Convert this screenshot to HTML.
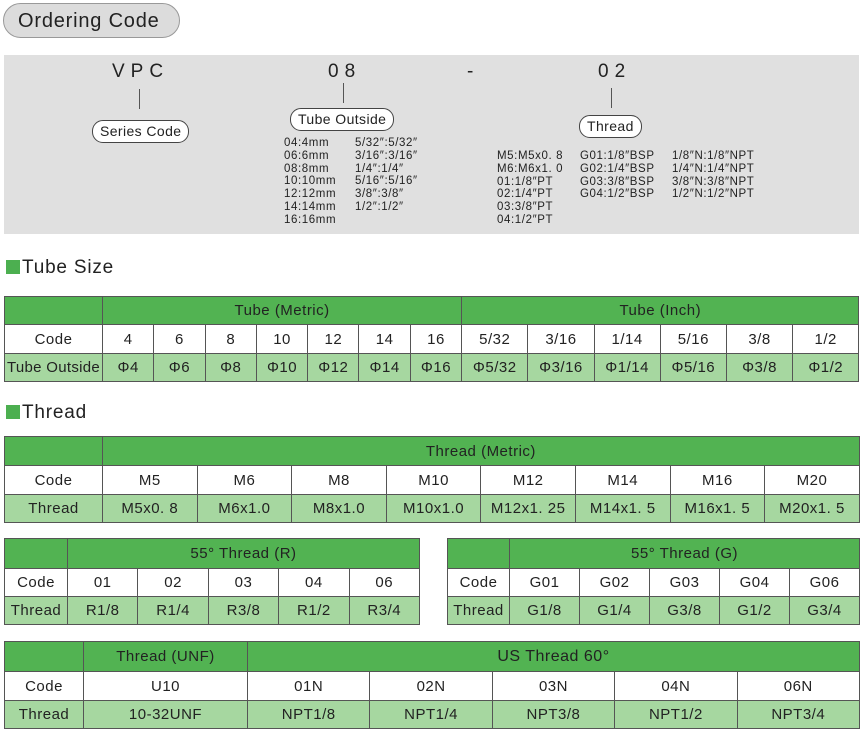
<!DOCTYPE html>
<html><head><meta charset="utf-8"><style>
*{margin:0;padding:0;box-sizing:border-box}
body{width:861px;height:739px;background:#fff;font-family:"Liberation Sans",sans-serif;color:#222;position:relative;overflow:hidden}
.pill{position:absolute;left:3px;top:3px;width:177px;height:35px;border:1px solid #999;border-radius:18px;background:#dcdcdc;font-size:20px;line-height:35px;padding-left:14px;letter-spacing:0.8px}
.panel{position:absolute;left:4px;top:55px;width:855px;height:179px;background:#e0e0e0}
.big{position:absolute;font-size:19px;letter-spacing:6px}
.vl{position:absolute;width:1px;height:20px;background:#555}
.lab{position:absolute;background:#fff;border:1px solid #444;border-radius:11px;font-size:14px;height:23px;line-height:21px;padding:0 7px;letter-spacing:0.4px}
.sm{position:absolute;font-size:11.5px;line-height:12.8px;white-space:pre;letter-spacing:0.6px}
h2{position:absolute;font-weight:normal;font-size:19px;left:6px;letter-spacing:0.8px}
h2 span{display:inline-block;width:14px;height:14px;background:#4caf50;margin-right:2px;vertical-align:-1px}
table{position:absolute;border-collapse:collapse;table-layout:fixed;font-size:15px;letter-spacing:0.5px}
td{border:1px solid #555;text-align:center;padding:0;white-space:nowrap;overflow:hidden}
tr.h td{background:#52b352}
tr.l td{background:#a6d7a0}
tr.w td{background:#fff}
</style></head><body>
<div class="pill">Ordering Code</div>
<div class="panel"></div>
<div class="big" style="left:112px;top:61px">VPC</div>
<div class="vl" style="left:139px;top:89px"></div>
<div class="lab" style="left:92px;top:120px">Series Code</div>
<div class="big" style="left:328px;top:61px">08</div>
<div class="vl" style="left:343px;top:83px"></div>
<div class="lab" style="left:290px;top:108px">Tube Outside</div>
<div class="sm" style="left:284px;top:137px">04:4mm
06:6mm
08:8mm
10:10mm
12:12mm
14:14mm
16:16mm</div>
<div class="sm" style="left:355px;top:137px">5/32″:5/32″
3/16″:3/16″
1/4″:1/4″
5/16″:5/16″
3/8″:3/8″
1/2″:1/2″</div>
<div class="big" style="left:467px;top:61px">-</div>
<div class="big" style="left:598px;top:61px">02</div>
<div class="vl" style="left:611px;top:88px"></div>
<div class="lab" style="left:579px;top:115px">Thread</div>
<div class="sm" style="left:497px;top:150px">M5:M5x0. 8
M6:M6x1. 0
01:1/8″PT
02:1/4″PT
03:3/8″PT
04:1/2″PT</div>
<div class="sm" style="left:580px;top:150px">G01:1/8″BSP
G02:1/4″BSP
G03:3/8″BSP
G04:1/2″BSP</div>
<div class="sm" style="left:672px;top:150px">1/8″N:1/8″NPT
1/4″N:1/4″NPT
3/8″N:3/8″NPT
1/2″N:1/2″NPT</div>

<h2 style="top:257px"><span></span>Tube Size</h2>
<table style="left:4px;top:296px;width:855px">
<colgroup><col style="width:98px"><col span="7" style="width:51.3px"><col span="6" style="width:66.2px"></colgroup>
<tr class="h" style="height:28px"><td></td><td colspan="7">Tube (Metric)</td><td colspan="6">Tube (Inch)</td></tr>
<tr class="w" style="height:29px"><td>Code</td><td>4</td><td>6</td><td>8</td><td>10</td><td>12</td><td>14</td><td>16</td><td>5/32</td><td>3/16</td><td>1/14</td><td>5/16</td><td>3/8</td><td>1/2</td></tr>
<tr class="l" style="height:28px"><td style="letter-spacing:0.3px">Tube Outside</td><td>Φ4</td><td>Φ6</td><td>Φ8</td><td>Φ10</td><td>Φ12</td><td>Φ14</td><td>Φ16</td><td>Φ5/32</td><td>Φ3/16</td><td>Φ1/14</td><td>Φ5/16</td><td>Φ3/8</td><td>Φ1/2</td></tr>
</table>

<h2 style="top:402px"><span></span>Thread</h2>
<table style="left:4px;top:436px;width:855px">
<colgroup><col style="width:98px"><col span="8" style="width:94.6px"></colgroup>
<tr class="h" style="height:29px"><td></td><td colspan="8">Thread (Metric)</td></tr>
<tr class="w" style="height:29px"><td>Code</td><td>M5</td><td>M6</td><td>M8</td><td>M10</td><td>M12</td><td>M14</td><td>M16</td><td>M20</td></tr>
<tr class="l" style="height:28px"><td>Thread</td><td>M5x0. 8</td><td>M6x1.0</td><td>M8x1.0</td><td>M10x1.0</td><td>M12x1. 25</td><td>M14x1. 5</td><td>M16x1. 5</td><td>M20x1. 5</td></tr>
</table>

<table style="left:4px;top:538px;width:415px">
<colgroup><col style="width:63px"><col span="5" style="width:70.4px"></colgroup>
<tr class="h" style="height:30px"><td></td><td colspan="5" style="font-size:15px">55° Thread (R)</td></tr>
<tr class="w" style="height:28px"><td>Code</td><td>01</td><td>02</td><td>03</td><td>04</td><td>06</td></tr>
<tr class="l" style="height:28px"><td>Thread</td><td>R1/8</td><td>R1/4</td><td>R3/8</td><td>R1/2</td><td>R3/4</td></tr>
</table>

<table style="left:447px;top:538px;width:412px">
<colgroup><col style="width:62px"><col span="5" style="width:70px"></colgroup>
<tr class="h" style="height:30px"><td></td><td colspan="5" style="font-size:15px">55° Thread (G)</td></tr>
<tr class="w" style="height:28px"><td>Code</td><td>G01</td><td>G02</td><td>G03</td><td>G04</td><td>G06</td></tr>
<tr class="l" style="height:28px"><td>Thread</td><td>G1/8</td><td>G1/4</td><td>G3/8</td><td>G1/2</td><td>G3/4</td></tr>
</table>

<table style="left:4px;top:641px;width:855px">
<colgroup><col style="width:79px"><col style="width:164px"><col span="5" style="width:122.4px"></colgroup>
<tr class="h" style="height:30px"><td></td><td>Thread (UNF)</td><td colspan="5" style="font-size:16px">US Thread 60°</td></tr>
<tr class="w" style="height:29px"><td>Code</td><td>U10</td><td>01N</td><td>02N</td><td>03N</td><td>04N</td><td>06N</td></tr>
<tr class="l" style="height:28px"><td>Thread</td><td>10-32UNF</td><td>NPT1/8</td><td>NPT1/4</td><td>NPT3/8</td><td>NPT1/2</td><td>NPT3/4</td></tr>
</table>
</body></html>
